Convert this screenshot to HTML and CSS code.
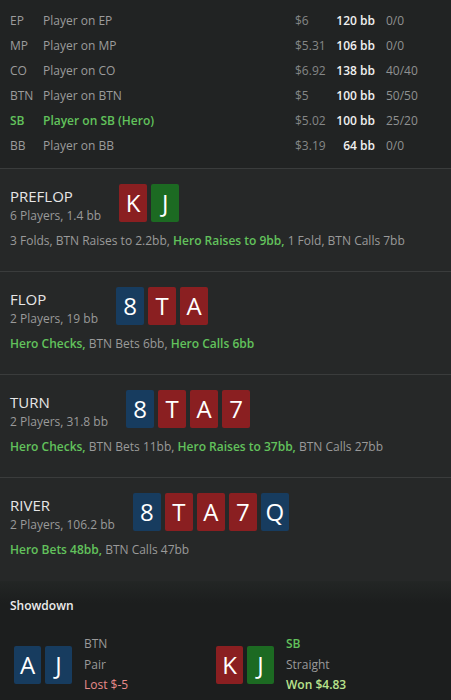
FILE: index.html
```html
<!DOCTYPE html>
<html>
<head>
<meta charset="utf-8">
<link rel="stylesheet" href="styles.css">
</head>
<body>
<div class="page">
  <div class="players">
    <div class="prow"><span class="pos">EP</span><span class="pname">Player on EP</span><span class="money">$6</span><span class="bb">120 bb</span><span class="stats">0/0</span></div>
    <div class="prow"><span class="pos">MP</span><span class="pname">Player on MP</span><span class="money">$5.31</span><span class="bb">106 bb</span><span class="stats">0/0</span></div>
    <div class="prow"><span class="pos">CO</span><span class="pname">Player on CO</span><span class="money">$6.92</span><span class="bb">138 bb</span><span class="stats">40/40</span></div>
    <div class="prow"><span class="pos">BTN</span><span class="pname">Player on BTN</span><span class="money">$5</span><span class="bb">100 bb</span><span class="stats">50/50</span></div>
    <div class="prow hero"><span class="pos">SB</span><span class="pname">Player on SB (Hero)</span><span class="money">$5.02</span><span class="bb">100 bb</span><span class="stats">25/20</span></div>
    <div class="prow"><span class="pos">BB</span><span class="pname">Player on BB</span><span class="money">$3.19</span><span class="bb">64 bb</span><span class="stats">0/0</span></div>
  </div>

  <div class="street">
    <div class="street-head">
      <div class="street-title">
        <div class="street-name">PREFLOP</div>
        <div class="street-sub">6 Players, 1.4 bb</div>
      </div>
      <div class="cards">
        <span class="card red">K</span><span class="card green">J</span>
      </div>
    </div>
    <div class="actions">3 Folds, BTN Raises to 2.2bb, <b class="hero-act">Hero Raises to 9bb,</b> 1 Fold, BTN Calls 7bb</div>
  </div>

  <div class="street">
    <div class="street-head">
      <div class="street-title">
        <div class="street-name">FLOP</div>
        <div class="street-sub">2 Players, 19 bb</div>
      </div>
      <div class="cards">
        <span class="card blue">8</span><span class="card red">T</span><span class="card red">A</span>
      </div>
    </div>
    <div class="actions"><b class="hero-act">Hero Checks,</b> BTN Bets 6bb, <b class="hero-act">Hero Calls 6bb</b></div>
  </div>

  <div class="street">
    <div class="street-head">
      <div class="street-title">
        <div class="street-name">TURN</div>
        <div class="street-sub">2 Players, 31.8 bb</div>
      </div>
      <div class="cards">
        <span class="card blue">8</span><span class="card red">T</span><span class="card red">A</span><span class="card red">7</span>
      </div>
    </div>
    <div class="actions"><b class="hero-act">Hero Checks,</b> BTN Bets 11bb, <b class="hero-act">Hero Raises to 37bb,</b> BTN Calls 27bb</div>
  </div>

  <div class="street last">
    <div class="street-head">
      <div class="street-title">
        <div class="street-name">RIVER</div>
        <div class="street-sub">2 Players, 106.2 bb</div>
      </div>
      <div class="cards">
        <span class="card blue">8</span><span class="card red">T</span><span class="card red">A</span><span class="card red">7</span><span class="card blue">Q</span>
      </div>
    </div>
    <div class="actions"><b class="hero-act">Hero Bets 48bb,</b> BTN Calls 47bb</div>
  </div>

  <div class="showdown">
    <div class="sd-title">Showdown</div>
    <div class="sd-grid">
      <div class="sd-player">
        <div class="cards sd-cards">
          <span class="card blue">A</span><span class="card blue">J</span>
        </div>
        <div class="sd-info">
          <div class="sd-pos">BTN</div>
          <div class="sd-hand">Pair</div>
          <div class="sd-lost">Lost $-5</div>
        </div>
      </div>
      <div class="sd-player">
        <div class="cards sd-cards">
          <span class="card red">K</span><span class="card green">J</span>
        </div>
        <div class="sd-info">
          <div class="sd-pos hero-pos">SB</div>
          <div class="sd-hand">Straight</div>
          <div class="sd-won">Won $4.83</div>
        </div>
      </div>
    </div>
  </div>
</div>
</body>
</html>
```

FILE: styles.css
```css
* { box-sizing: border-box; }
html, body {
  margin: 0;
  padding: 0;
  background: #1d1f1f;
}
body {
  font-family: "Open Sans", "Noto Sans", sans-serif;
  font-size: 12px;
  color: #9a9a9a;
  width: 451px;
}
.page {
  display: flex;
  flex-direction: column;
}

/* players table */
.players {
  background: #212323;
  padding: 8px 0 10px 0;
  border-bottom: 1px solid #3a3c3c;
  height: 169px;
}
.prow {
  display: grid;
  grid-template-columns: 33px 252px 38px 42px 76px;
  padding-left: 10px;
  height: 25px;
  align-items: center;
  line-height: 25px;
  white-space: nowrap;
}
.pos, .pname { color: #9c9c9c; }
.money { color: #858787; }
.bb {
  color: #f0f0f0;
  font-weight: 600;
  text-align: right;
}
.stats {
  padding-left: 11px;
  color: #8f9191;
}
.prow.hero .pos, .prow.hero .pname {
  color: #62c25c;
  font-weight: 600;
}

/* streets */
.street {
  background: #262828;
  padding: 15px 10px 19px 10px;
  border-bottom: 1px solid #3a3c3c;
  height: 103px;
}
.street.last {
  border-bottom: none;
}
.street-head {
  display: flex;
  align-items: flex-start;
  gap: 18px;
}
.street-title {
  margin-top: 2px;
}
.street-name {
  font-size: 15px;
  line-height: 20px;
  color: #e6e6e6;
}
.street-sub {
  font-size: 12px;
  line-height: 19px;
  color: #9a9a9a;
}
.cards {
  display: flex;
  gap: 4px;
}
.card {
  width: 28px;
  height: 38px;
  border-radius: 2px;
  color: #ffffff;
  font-size: 24px;
  line-height: 38px;
  text-align: center;
  font-family: "Open Sans", "Noto Sans", sans-serif;
}
.card.red { background: #8a1f21; }
.card.green { background: #1c6a22; }
.card.blue { background: #173c5f; }
.actions {
  margin-top: 6px;
  line-height: 20px;
  color: #9a9a9a;
  white-space: nowrap;
}
.hero-act {
  color: #62c25c;
  font-weight: 600;
}

/* showdown */
.showdown {
  background: linear-gradient(to bottom, #232625 0px, #1c1e1e 22px, #1c1e1e 100%);
  padding: 16px 0 0 10px;
  height: 120px;
}
.sd-title {
  color: #ececec;
  font-weight: 600;
  font-size: 12px;
  line-height: 18px;
}
.sd-grid {
  display: grid;
  grid-template-columns: 202px 202px;
  margin-top: 19px;
  padding-left: 4px;
}
.sd-player {
  display: flex;
  align-items: center;
  gap: 12px;
}
.sd-cards .card {
  width: 27px;
}
.sd-info {
  line-height: 20.5px;
}
.sd-pos { color: #9a9a9a; }
.sd-pos.hero-pos { color: #62c25c; font-weight: 600; }
.sd-hand { color: #9a9a9a; }
.sd-lost { color: #e88b8b; }
.sd-won { color: #b9e38d; font-weight: 600; }
```
